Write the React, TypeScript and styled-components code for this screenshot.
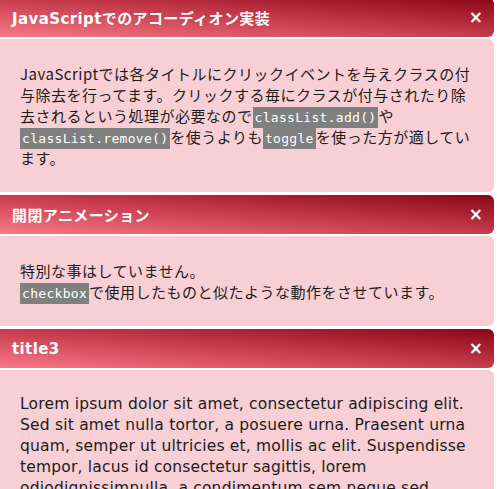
import React from "react";
import styled, { createGlobalStyle } from "styled-components";

const Global = createGlobalStyle`
  html, body { margin: 0; padding: 0; background: #ffffff; }
  body { overflow: hidden; }
`;

const Accordion = styled.div`
  display: flex;
  flex-direction: column;
  gap: 3px;
  width: 504px;
  margin: -2px 0 0 -10px;
`;

const Item = styled.section`
  display: flex;
  flex-direction: column;
  gap: 2px;
`;

const Header = styled.div`
  display: flex;
  align-items: center;
  justify-content: space-between;
  height: 39px;
  padding: 0 11px 0 22px;
  border-radius: 6px;
  background: linear-gradient(to top right, #f87a88 0%, #c73d4d 50%, #8a0614 100%);
  color: #ffffff;
  font-family: "DejaVu Sans", "Noto Sans CJK JP", sans-serif;
  font-weight: bold;
  font-size: 15px;
  letter-spacing: 0.4px;
`;

const Title = styled.span``;

const Close = styled.span`
  font-family: "DejaVu Sans", sans-serif;
  font-weight: bold;
  font-size: 17px;
  line-height: 1;
  letter-spacing: 0;
`;

const Body = styled.div<{ $latin?: boolean }>`
  background: #f7cfd4;
  border-radius: 6px;
  padding: 24px 20px 24px 30px;
  color: #1c1c1c;
  font-family: ${(p) =>
    p.$latin ? `"DejaVu Sans", sans-serif` : `"Noto Sans CJK JP", sans-serif`};
  font-size: ${(p) => (p.$latin ? "15.5px" : "15px")};
  letter-spacing: ${(p) => (p.$latin ? "0.2px" : "0.5px")};
  line-height: 21px;
`;

const Para = styled.p`
  margin: 0;
`;

const Code = styled.code`
  background: #808080;
  color: #ffffff;
  font-family: "DejaVu Sans Mono", monospace;
  font-size: 13px;
  padding: 3px 2px;
  letter-spacing: 0.3px;
  line-height: 0;
`;

const items = [
  {
    title: "JavaScriptでのアコーディオン実装",
    body: (
      <Para>
        JavaScriptでは各タイトルにクリックイベントを与えクラスの付
        <br />
        与除去を行ってます。クリックする毎にクラスが付与されたり除
        <br />
        去されるという処理が必要なので<Code>classList.add()</Code>や
        <br />
        <Code>classList.remove()</Code>を使うよりも<Code>toggle</Code>を使った方が適してい
        <br />
        ます。
      </Para>
    ),
  },
  {
    title: "開閉アニメーション",
    body: (
      <>
        <Para>特別な事はしていません。</Para>
        <Para>
          <Code>checkbox</Code>で使用したものと似たような動作をさせています。
        </Para>
      </>
    ),
  },
  {
    title: "title3",
    latin: true,
    body: (
      <Para>
        Lorem ipsum dolor sit amet, consectetur adipiscing elit. Sed sit amet nulla tortor, a posuere urna. Praesent urna
        quam, semper ut ultricies et, mollis ac elit. Suspendisse tempor, lacus id consectetur sagittis, lorem
        odiodignissimnulla, a condimentum sem neque sed vulputate. Nam vitae dolor eu mauris ultrices tincidunt.
      </Para>
    ),
  },
];

export default function App() {
  return (
    <>
      <Global />
      <Accordion>
        {items.map((it) => (
          <Item key={it.title}>
            <Header>
              <Title>{it.title}</Title>
              <Close>×</Close>
            </Header>
            <Body $latin={it.latin}>{it.body}</Body>
          </Item>
        ))}
      </Accordion>
    </>
  );
}
